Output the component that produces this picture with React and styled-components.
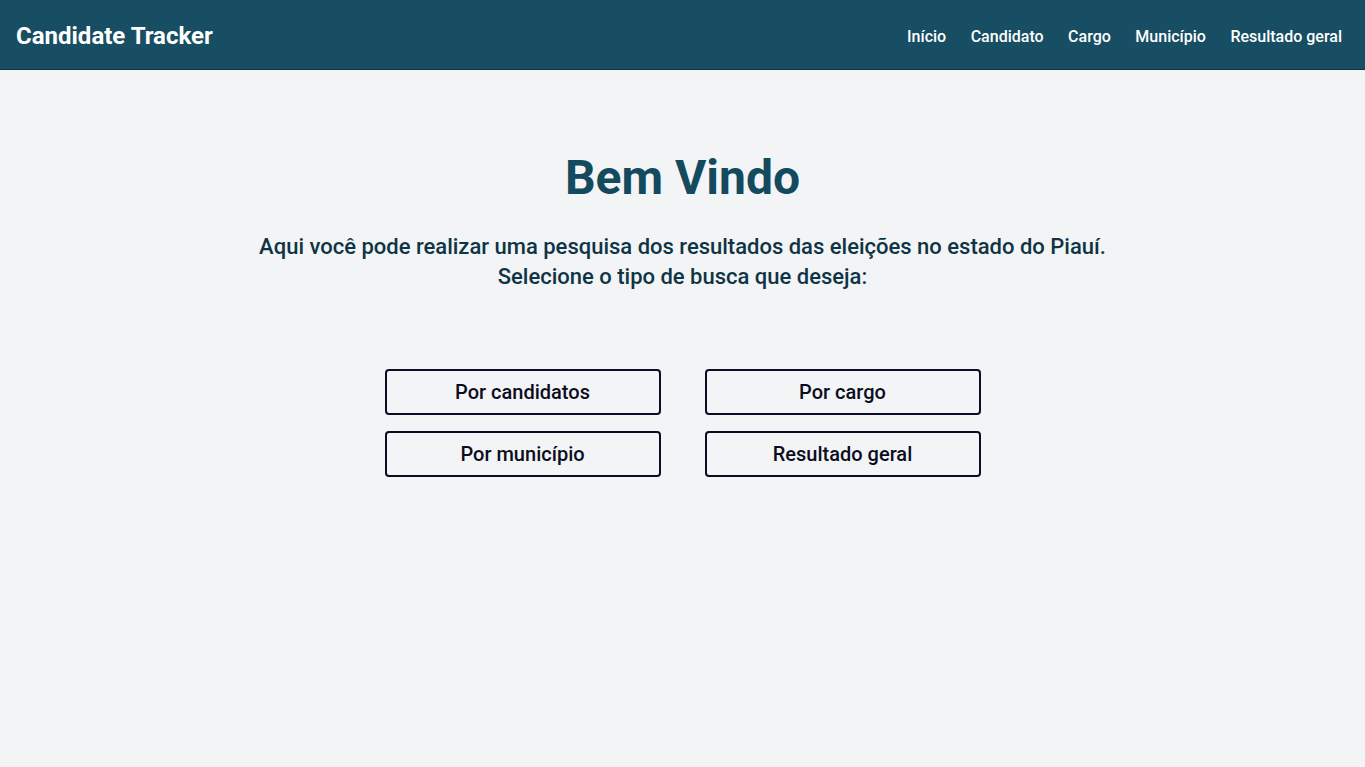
import React from 'react';
import styled, { createGlobalStyle } from 'styled-components';

const GlobalStyle = createGlobalStyle`
  body {
    margin: 0;
    background: #f3f4f6;
    font-family: Roboto, "Liberation Sans", sans-serif;
  }
`;

const Header = styled.header`
  box-sizing: border-box;
  height: 70px;
  background: #174e63;
  border-bottom: 1px solid #0e3443;
  display: flex;
  align-items: center;
  justify-content: space-between;
  padding: 2px 23px 0 16px;
`;

const Logo = styled.div`
  color: #fff;
  font-size: 24px;
  font-weight: 700;
`;

const Nav = styled.nav`
  display: flex;
  gap: 24.5px;
  padding-top: 1px;
`;

const NavLink = styled.a`
  color: #fff;
  font-size: 16px;
  font-weight: 500;
  text-decoration: none;
  cursor: pointer;
`;

const Main = styled.main`
  display: flex;
  flex-direction: column;
  align-items: center;
  padding-top: 76px;
`;

const Title = styled.h1`
  margin: 0;
  color: #144a5e;
  font-size: 48px;
  font-weight: 700;
  line-height: 64px;
`;

const Subtitle = styled.p`
  margin: 22px 0 0;
  color: #0f3445;
  font-size: 22px;
  font-weight: 500;
  line-height: 30px;
  text-align: center;
`;

const Grid = styled.div`
  margin-top: 77px;
  display: grid;
  grid-template-columns: repeat(2, 276px);
  column-gap: 44px;
  row-gap: 16px;
`;

const Option = styled.button`
  height: 46px;
  border: 2px solid #0b0d24;
  border-radius: 4px;
  background: transparent;
  color: #0b0d1e;
  font-family: inherit;
  font-size: 20px;
  font-weight: 500;
  cursor: pointer;
`;

const links = ['Início', 'Candidato', 'Cargo', 'Município', 'Resultado geral'];
const options = ['Por candidatos', 'Por cargo', 'Por município', 'Resultado geral'];

export default function App() {
  return (
    <>
      <GlobalStyle />
      <Header>
        <Logo>Candidate Tracker</Logo>
        <Nav>
          {links.map(l => <NavLink key={l}>{l}</NavLink>)}
        </Nav>
      </Header>
      <Main>
        <Title>Bem Vindo</Title>
        <Subtitle>
          Aqui você pode realizar uma pesquisa dos resultados das eleições no estado do Piauí.
          <br />
          Selecione o tipo de busca que deseja:
        </Subtitle>
        <Grid>
          {options.map(o => <Option key={o}>{o}</Option>)}
        </Grid>
      </Main>
    </>
  );
}
